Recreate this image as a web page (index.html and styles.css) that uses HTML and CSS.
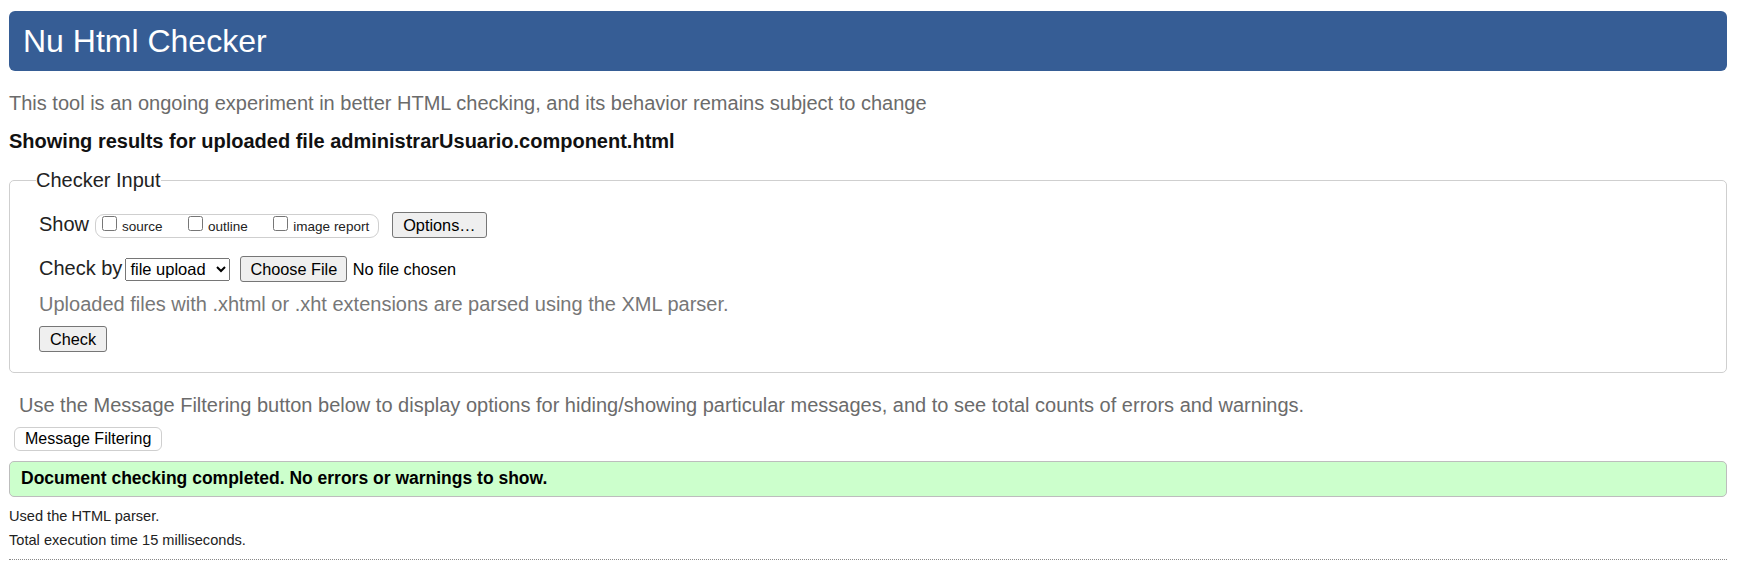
FILE: index.html
```html
<!DOCTYPE html>
<html lang="en">
<head>
<meta charset="utf-8">
<title>Nu Html Checker</title>
<link rel="stylesheet" href="styles.css">
</head>
<body>
<div class="page">
  <header class="banner"><h1 class="title">Nu Html Checker</h1></header>
  <p class="tagline">This tool is an ongoing experiment in better HTML checking, and its behavior remains subject to change</p>
  <p class="results-for">Showing results for uploaded file administrarUsuario.component.html</p>
  <form class="checker-form">
    <fieldset class="checker">
      <legend class="checker-legend">Checker Input</legend>
      <div class="row row-show">
        <span class="row-label">Show</span>
        <span class="show-pill"><label class="opt"><input type="checkbox" class="cb"><span>source</span></label><label class="opt"><input type="checkbox" class="cb"><span>outline</span></label><label class="opt"><input type="checkbox" class="cb"><span>image report</span></label></span>
        <button type="button" class="btn btn-options">Options…</button>
      </div>
      <div class="row row-check">
        <label class="row-label" for="docselect">Check by</label>
        <select id="docselect" class="sel"><option>file upload</option></select>
        <input type="file" class="file">
      </div>
      <p class="hint">Uploaded files with .xhtml or .xht extensions are parsed using the XML parser.</p>
      <div class="row row-submit">
        <button type="button" class="btn">Check</button>
      </div>
    </fieldset>
  </form>
  <p class="filter-note">Use the Message Filtering button below to display options for hiding/showing particular messages, and to see total counts of errors and warnings.</p>
  <button type="button" class="btn-filter">Message Filtering</button>
  <div class="success">Document checking completed. No errors or warnings to show.</div>
  <p class="meta meta-first">Used the HTML parser.</p>
  <p class="meta">Total execution time 15 milliseconds.</p>
  <div class="rule"></div>
</div>
</body>
</html>
```
FILE: styles.css
```css
body {
  margin: 0;
  font-family: "Liberation Sans", Arial, sans-serif;
  color: #222;
  background: #fff;
}

.page {
  padding: 11px 13px 0 9px;
}

.banner {
  height: 60px;
  background: #365d95;
  border-radius: 6px;
  padding-left: 14px;
  display: flex;
  align-items: center;
}

.title {
  margin: 0;
  font-size: 32px;
  font-weight: normal;
  line-height: 60px;
  color: #fff;
}

.tagline {
  margin: 20px 0 0;
  font-size: 20px;
  line-height: 24px;
  color: #6b6b6b;
}

.results-for {
  margin: 14px 0 0;
  font-size: 20px;
  line-height: 24px;
  font-weight: bold;
  color: #111;
}

.checker-form {
  margin: 0;
}

.checker {
  margin: 15px 0 0;
  padding: 20px 0 20px 29px;
  border: 1px solid #cfcfcf;
  border-radius: 5px;
  min-width: 0;
}

.checker-legend {
  margin-left: -3px;
  padding: 0;
  font-size: 20px;
  line-height: 24px;
  color: #222;
}

.row {
  display: flex;
  align-items: baseline;
}

.row-label {
  font-size: 20px;
  line-height: 20px;
  color: #222;
}

.show-pill {
  margin-left: 6px;
  border: 1px solid #cfcfcf;
  border-radius: 9px;
  padding: 1px 9px 0 6px;
  font-size: 13.5px;
  line-height: 20px;
  white-space: nowrap;
  color: #222;
}

.opt {
  margin-right: 25.5px;
}

.opt:last-child {
  margin-right: 0;
}

.cb {
  margin: 0 5px 0 0;
  width: 15px;
  height: 15px;
  vertical-align: baseline;
}

.btn {
  margin: 0;
  font-family: inherit;
  font-size: 16.3px;
  line-height: 20px;
  padding: 2px 10px;
  border: 1px solid #767676;
  border-radius: 3px;
  background: #efefef;
  color: #000;
}

.btn-options {
  margin-left: 13px;
}

.row-check {
  margin-top: 18px;
}

.sel {
  margin: 0 0 0 3px;
  font-family: inherit;
  font-size: 16.5px;
  height: 23px;
  width: 105px;
  color: #000;
}

.file {
  margin-left: 10px;
  font-family: inherit;
  font-size: 16.3px;
  color: #000;
}

.file::file-selector-button {
  font: inherit;
  line-height: 20px;
  padding: 2px 9px;
  border: 1px solid #767676;
  border-radius: 3px;
  background: #efefef;
  color: #000;
  margin-right: 5.6px;
}

.hint {
  margin: 10px 0 0;
  font-size: 20px;
  line-height: 24px;
  color: #777;
}

.row-submit {
  margin-top: 10px;
}

.filter-note {
  margin: 20px 0 0 10px;
  font-size: 20px;
  line-height: 24px;
  color: #6b6b6b;
}

.btn-filter {
  display: block;
  margin: 10px 0 0 5px;
  font-family: inherit;
  font-size: 16px;
  line-height: 20px;
  padding: 1px 10px;
  border: 1px solid #cfcfcf;
  border-radius: 6px;
  background: #fff;
  color: #000;
}

.success {
  margin-top: 10px;
  background: #ccffcc;
  border: 1px solid #bdbdbd;
  border-radius: 5px;
  padding: 6px 11px 8px;
  font-size: 17.5px;
  line-height: 20px;
  font-weight: bold;
  color: #000;
}

.meta {
  margin: 0;
  font-size: 14.6px;
  line-height: 24px;
  color: #222;
}

.meta-first {
  margin-top: 7px;
}

.rule {
  margin-top: 7px;
  border-top: 1px dotted #888;
}
```
